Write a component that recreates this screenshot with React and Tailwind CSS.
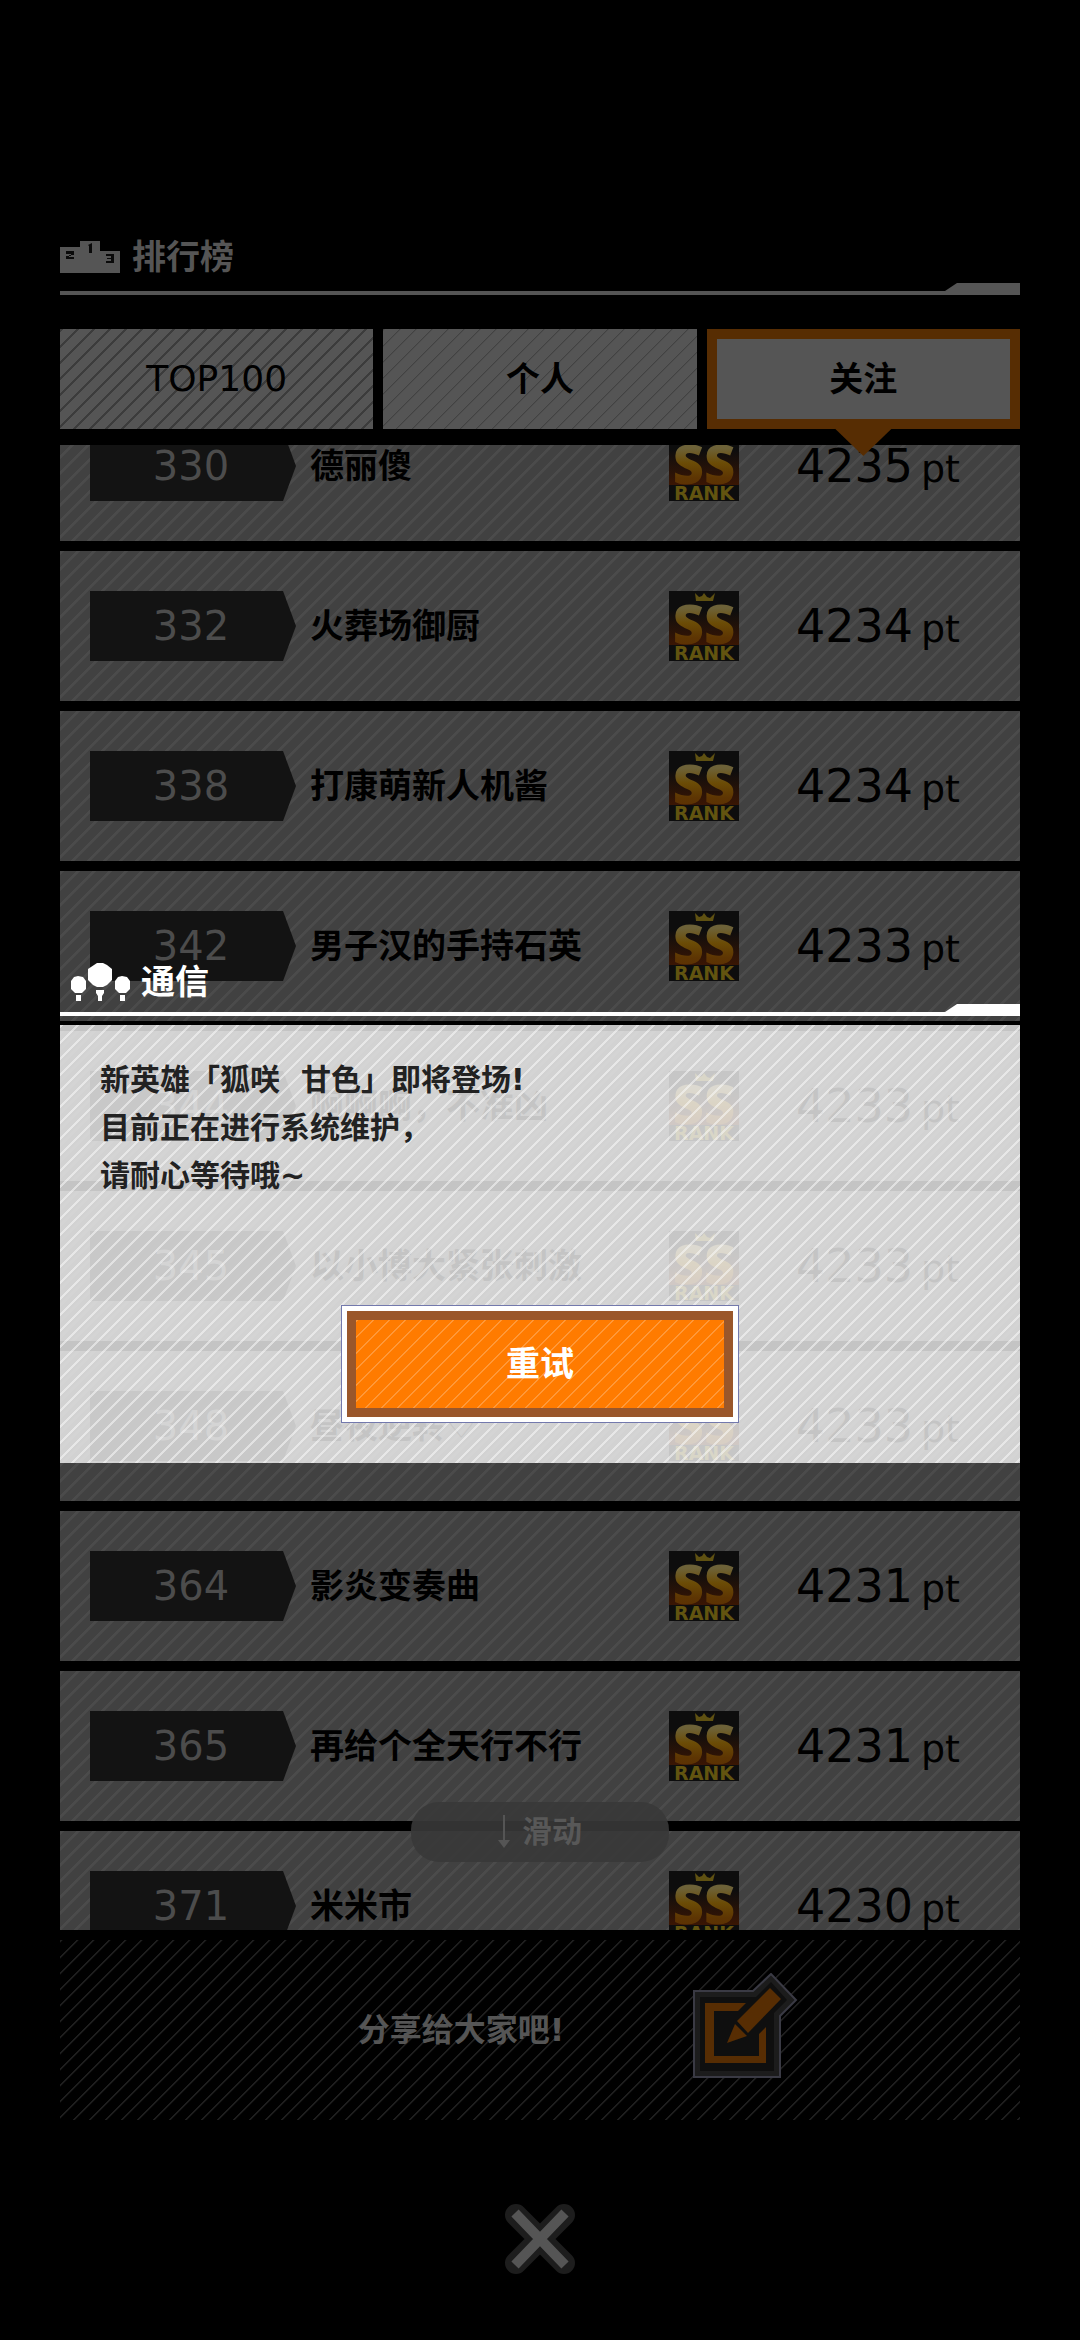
import React from 'react';
import { clsx } from 'clsx';

const players = [
  { rank: 330, name: '德丽傻', points: 4235 },
  { rank: 332, name: '火葬场御厨', points: 4234 },
  { rank: 338, name: '打康萌新人机酱', points: 4234 },
  { rank: 342, name: '男子汉的手持石英', points: 4233 },
  { rank: 344, name: '啊啊啊，不准凶', points: 4233 },
  { rank: 345, name: '以小博大紧张刺激', points: 4233 },
  { rank: 348, name: '昼夜逆转♡', points: 4233 },
  { rank: 364, name: '影炎变奏曲', points: 4231 },
  { rank: 365, name: '再给个全天行不行', points: 4231 },
  { rank: 371, name: '米米市', points: 4230 },
];

const tabs = ['TOP100', '个人', '关注'];

const PodiumIcon = () => (
  <svg viewBox="0 0 60 32" className="h-8 w-15" aria-hidden="true">
    <path d="M0 6h20V0h20v10h20v22H0z" fill="#555" />
    <path d="M6 10h8v4H9v2h5v2H6v-3h5v-2H6z" fill="#0a0a0a" />
    <path d="M28 4l4-2v10h-3V5z" fill="#0a0a0a" />
    <path d="M46 13h8v9h-8v-2h5v-2h-4v-1h4v-2h-5z" fill="#0a0a0a" />
  </svg>
);

const TreesIcon = () => (
  <svg viewBox="0 0 62 40" className="h-10 w-[62px]" fill="#fff" aria-hidden="true">
    <path d="M5 15l4-1 5 1 3 4v8l-4 4H6l-4-4v-8z" />
    <path d="M7 33h5v6H7z" />
    <path d="M25 3l3-2h6l4 2 5 4v11l-5 5-4 2h-6l-4-2-5-5V7z" />
    <path d="M27 28h8v3l-2 3v5h-4v-5l-2-3z" />
    <path d="M49 15l4-1 5 1 3 4v8l-4 4h-7l-4-4v-8z" />
    <path d="M51 33h5v6h-5z" />
  </svg>
);

const ShareIcon = () => (
  <svg viewBox="0 0 106 106" className="size-[106px]" aria-hidden="true">
    <path d="M2 18h59L79 1l25 26-16 16v61H2z" fill="#1c1c1c" stroke="#3a3a44" strokeWidth="2" />
    <path d="M8 24h56L79 9l16 18-13 13v58H8z" fill="#0f0f0f" />
    <path d="M13 30h41l-8 8H22v45h45V61l7-7v36H13z" fill="#572d03" />
    <path d="M78 15l11 11-33 34-11-12z" fill="#572d03" />
    <path d="M43 51l12 12-20 7z" fill="#572d03" />
  </svg>
);

const CloseIcon = () => (
  <svg viewBox="0 0 72 72" className="size-18" aria-hidden="true">
    <path d="M12 12l48 48M60 12L12 60" stroke="#1d1d1d" strokeWidth="22" strokeLinecap="round" />
    <path d="M11 10l50 52M61 10L11 62" stroke="#555" strokeWidth="10" />
  </svg>
);

const RankBadge = () => (
  <svg viewBox="0 0 70 70" className="size-[70px] shrink-0" role="img" aria-label="SS RANK">
    <defs>
      <linearGradient id="badgeBg" x1="0" y1="0" x2="0" y2="1">
        <stop offset="0.35" stopColor="#0d0d0d" />
        <stop offset="1" stopColor="#3a1604" />
      </linearGradient>
      <linearGradient id="badgeText" x1="0" y1="0" x2="0" y2="1">
        <stop offset="0.3" stopColor="#6d6238" />
        <stop offset="0.5" stopColor="#6b4c06" />
        <stop offset="0.7" stopColor="#5d3503" />
        <stop offset="1" stopColor="#5a2a04" />
      </linearGradient>
    </defs>
    <rect width="70" height="70" fill="#0d0d0d" />
    <rect width="70" height="54" fill="url(#badgeBg)" />
    <path d="M26 2l4 4 3-1 2-3 3 4 3 1 5-5-2 8H27z" fill="#5f5112" />
    <text x="35" y="53" textAnchor="middle" fontFamily="Noto Sans, sans-serif" fontWeight="900" fontSize="54" fill="url(#badgeText)">SS</text>
    <rect y="54" width="70" height="16" fill="#0d0d0d" />
    <text x="35" y="69" textAnchor="middle" fontFamily="DejaVu Sans, sans-serif" fontWeight="700" fontSize="19" fill="#625410">RANK</text>
  </svg>
);

// Thin rule with the raised corner on the right
const TitleRule = ({ className }) => (
  <div className="flex flex-col items-end">
    <div className={clsx('h-2 w-[75px] [clip-path:polygon(12px_0,100%_0,100%_100%,0_100%)]', className)} />
    <div className={clsx('h-1 w-full', className)} />
  </div>
);

const Tab = ({ label, index, active }) => (
  <button
    role="tab"
    aria-selected={active}
    className={clsx(
      "relative h-[100px] text-black",
      index === 0 ? "text-4xl" : "text-[34px] font-bold",
      active && "border-10 border-[#572d03] bg-[#555]",
      !active && "bg-[#555] bg-size-[16px_16px]",
      !active && index === 0 && "bg-[linear-gradient(135deg,#3c3c3c_0_10%,transparent_12%_50%,#3c3c3c_50%_60%,transparent_62%)]",
      !active && index === 1 && "bg-[linear-gradient(135deg,#424242_0_5%,transparent_7%_50%,#424242_50%_55%,transparent_57%)]"
    )}
  >
    {label}
    {active && (
      <span className="absolute top-full left-1/2 z-10 mt-[9px] h-7 w-[58px] -translate-x-1/2 bg-[#572d03] [clip-path:polygon(0_0,100%_0,50%_100%)]" />
    )}
  </button>
);

const PlayerRow = ({ rank, name, points }) => (
  <li className="flex h-[150px] shrink-0 items-center bg-[#414141] bg-[linear-gradient(135deg,#4b4b4b_0_12%,transparent_14%_50%,#4b4b4b_50%_62%,transparent_64%)] bg-size-[16px_16px] pr-15 pl-[30px]">
    <span className="flex h-[70px] w-[206px] shrink-0 items-center justify-center bg-[#131313] pr-1 text-[40px] text-[#4c4c4c] [clip-path:polygon(0_0,193px_0,100%_50%,193px_100%,0_100%)]">
      {rank}
    </span>
    <span className="ml-[14px] w-[359px] whitespace-nowrap text-[34px] font-bold text-black">{name}</span>
    <RankBadge />
    <span className="ml-auto flex items-baseline gap-2 text-[46px] text-black">
      {points}
      <small className="text-[38px]">pt</small>
    </span>
  </li>
);

const MaintenanceDialog = () => (
  <section role="dialog" aria-labelledby="dialog-title" className="absolute inset-x-15 top-[960px] z-20">
    <header className="flex h-11 items-center gap-[10px] pl-[9px]">
      <TreesIcon />
      <h2 id="dialog-title" className="text-[34px] leading-10 font-bold text-white">通信</h2>
    </header>
    <TitleRule className="bg-white" />
    <div className="mt-[5px] h-1 bg-black" />
    <div className="flex flex-col items-center bg-[#fbfbfb]/78 bg-[linear-gradient(135deg,#ffffff78_0_10%,transparent_12%_50%,#ffffff78_50%_60%,transparent_62%)] bg-size-[16px_16px] px-10 pt-[31px] pb-10">
      <p className="w-full text-3xl leading-[48px] font-bold whitespace-pre-line text-[#222]">
        {'新英雄「狐咲\u00a0\u00a0甘色」即将登场!\n目前正在进行系统维护，\n请耐心等待哦~'}
      </p>
      <button className="mt-[105px] border border-[#7379ad] bg-white p-[5px]">
        <span className="flex h-[106px] w-[386px] items-center justify-center border-9 border-[#9a572b] bg-[#ff7b00] bg-[linear-gradient(135deg,#ff9a3c_0_6%,transparent_8%_50%,#ff9a3c_50%_56%,transparent_58%)] bg-size-[16px_16px] text-[34px] font-bold text-white">
          重试
        </span>
      </button>
    </div>
  </section>
);

export default function App() {
  return (
    <div className="relative flex min-h-screen flex-col bg-black px-15 font-['DejaVu_Sans','Noto_Sans_CJK_SC',sans-serif]">
      <header className="mt-[237px] flex h-10 items-center gap-3">
        <PodiumIcon />
        <h1 className="text-[34px] leading-10 font-bold text-[#555]">排行榜</h1>
      </header>
      <div className="mt-[6px]">
        <TitleRule className="bg-[#555]" />
      </div>

      <nav role="tablist" className="mt-[34px] grid grid-cols-3 gap-[10px]">
        {tabs.map((label, i) => (
          <Tab key={label} label={label} index={i} active={i === 2} />
        ))}
      </nav>

      <div className="relative mt-4 h-[1485px] overflow-hidden">
        <ul className="-mt-[54px] flex flex-col gap-[10px]">
          {players.map((player) => (
            <PlayerRow key={player.rank} {...player} />
          ))}
        </ul>
        <div className="absolute bottom-17 left-1/2 flex h-15 w-[258px] -translate-x-1/2 items-center justify-center gap-3 rounded-[28px] bg-[#383838]/90 text-3xl font-bold text-[#585858]">
          <svg viewBox="0 0 12 34" className="h-[34px] w-3" aria-hidden="true">
            <path d="M6 0v28" stroke="#555" strokeWidth="2" />
            <path d="M0 25h12l-6 8z" fill="#555" />
          </svg>
          滑动
        </div>
      </div>

      <footer className="mt-[10px] flex h-[180px] items-center justify-center gap-32 bg-[linear-gradient(135deg,#1e1e1e_0_8%,transparent_10%_50%,#1e1e1e_50%_58%,transparent_60%)] bg-size-[16px_16px] pl-19">
        <p className="text-[32px] font-bold text-[#555]">分享给大家吧!</p>
        <button aria-label="分享" className="mb-2">
          <ShareIcon />
        </button>
      </footer>

      <button aria-label="关闭" className="mx-auto mt-[83px]">
        <CloseIcon />
      </button>

      <MaintenanceDialog />
    </div>
  );
}
